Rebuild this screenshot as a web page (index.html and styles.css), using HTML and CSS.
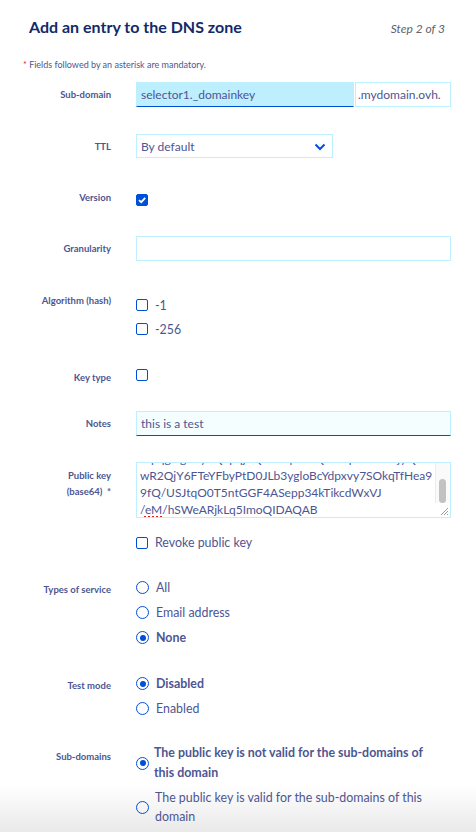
FILE: index.html
```html
<!DOCTYPE html>
<html lang="en">
<head>
<meta charset="utf-8">
<title>Add an entry to the DNS zone</title>
<link rel="stylesheet" href="styles.css">
</head>
<body>
<div class="page">
  <header class="head">
    <h1 class="title">Add an entry to the DNS zone</h1>
    <span class="step">Step 2 of 3</span>
  </header>
  <p class="note"><span class="ast">*</span> Fields followed by an asterisk are mandatory.</p>

  <div class="form">
    <div class="row mt-sub">
      <div class="lbl">Sub-domain</div>
      <div class="field">
        <div class="combo">
          <div class="input active grow">selector1._domainkey</div>
          <div class="suffix">.mydomain.ovh.</div>
        </div>
      </div>
    </div>

    <div class="row mt-27">
      <div class="lbl">TTL</div>
      <div class="field">
        <div class="select">
          <span>By default</span>
          <svg class="chev" width="12" height="8" viewBox="0 0 12 8"><path d="M1.5 1.5 L6 6 L10.5 1.5" fill="none" stroke="#0050d7" stroke-width="2"/></svg>
        </div>
      </div>
    </div>

    <div class="row mt-30">
      <div class="lbl l-10">Version</div>
      <div class="field">
        <div class="opt"><span class="cb on"><svg width="10" height="10" viewBox="0 0 10 10"><path d="M2 5.2 L4.2 7.2 L8.2 2.8" fill="none" stroke="#fff" stroke-width="1.8"/></svg></span></div>
      </div>
    </div>

    <div class="row mt-24">
      <div class="lbl">Granularity</div>
      <div class="field"><div class="input"></div></div>
    </div>

    <div class="row mt-32">
      <div class="lbl l-8">Algorithm (hash)</div>
      <div class="field">
        <div class="opt"><span class="cb"></span><span>-1</span></div>
        <div class="opt"><span class="cb"></span><span>-256</span></div>
      </div>
    </div>

    <div class="row mt-22">
      <div class="lbl l-15">Key type</div>
      <div class="field">
        <div class="opt"><span class="cb"></span></div>
      </div>
    </div>

    <div class="row mt-24">
      <div class="lbl">Notes</div>
      <div class="field"><div class="input filled">this is a test</div></div>
    </div>

    <div class="row mt-26">
      <div class="lbl l-pk">Public key<br>(base64)&nbsp; *</div>
      <div class="field">
        <div class="ta">
          <div class="ta-text">
            <div>MpqgOgUzyhQbpqjuQnmWpLEzQ1vRtpdNcMiFjyQ</div>
            <div>wR2QjY6FTeYFbyPtD0JLb3ygloBcYdpxvy7SOkqTfHea9</div>
            <div>9fQ/USJtqO0T5ntGGF4ASepp34kTikcdWxVJ</div>
            <div>/<span class="spell">eM</span>/hSWeARjkLq5ImoQIDAQAB</div>
          </div>
          <span class="track"><span class="thumb"></span></span>
          <svg class="grip" width="10" height="10" viewBox="0 0 10 10"><path d="M9 2 L2 9 M9 5 L5 9 M9 8 L8 9" stroke="#9a9a9a" stroke-width="1"/></svg>
        </div>
        <div class="opt revoke"><span class="cb"></span><span>Revoke public key</span></div>
      </div>
    </div>

    <div class="row mt-20">
      <div class="lbl l-15">Types of service</div>
      <div class="field">
        <div class="opt r"><span class="rd"></span><span>All</span></div>
        <div class="opt r"><span class="rd"></span><span>Email address</span></div>
        <div class="opt r"><span class="rd on"></span><span class="b">None</span></div>
      </div>
    </div>

    <div class="row mt-21">
      <div class="lbl l-15">Test mode</div>
      <div class="field">
        <div class="opt r"><span class="rd on"></span><span class="b">Disabled</span></div>
        <div class="opt r"><span class="rd"></span><span>Enabled</span></div>
      </div>
    </div>

    <div class="row mt-22">
      <div class="lbl l-14">Sub-domains</div>
      <div class="field">
        <div class="opt long"><span class="rd on"></span><span class="b wrap1">The public key is not valid for the sub-domains of this domain</span></div>
        <div class="opt long"><span class="rd"></span><span>The public key is valid for the sub-domains of this domain</span></div>
      </div>
    </div>
  </div>
</div>
</body>
</html>
```

FILE: styles.css
```css
* { box-sizing: border-box; }

body {
  margin: 0;
  font-family: Lato, "Liberation Sans", sans-serif;
  color: #4d5693;
  background: #fff;
}

.page {
  width: 476px;
  height: 832px;
  overflow: hidden;
  background: linear-gradient(to bottom, #fff 0, #fff 785px, #e9e9e9 832px);
}

.head {
  display: flex;
  justify-content: space-between;
  align-items: baseline;
  padding: 16px 31px 0 29px;
}

.title {
  margin: 0;
  font-size: 16px;
  line-height: 22px;
  font-weight: 700;
  color: #122a6b;
}

.step {
  font-size: 12px;
  font-style: italic;
  color: #5e6170;
}

.note {
  margin: 21px 0 0 23px;
  font-size: 9px;
  line-height: 12px;
}

.ast { color: #e2211c; }

.row { display: flex; }
.mt-sub { margin-top: 11px; }
.mt-20 { margin-top: 20px; }
.mt-21 { margin-top: 21px; }
.mt-22 { margin-top: 22px; }
.mt-24 { margin-top: 24px; }
.mt-26 { margin-top: 26px; }
.mt-27 { margin-top: 27px; }
.mt-30 { margin-top: 30px; }
.mt-32 { margin-top: 32px; }

.lbl {
  width: 111px;
  flex: none;
  text-align: right;
  font-size: 9.5px;
  font-weight: 700;
  line-height: 14px;
  padding-top: 6px;
}
.l-8 { padding-top: 1px; }
.l-10 { padding-top: 3px; }
.l-14 { padding-top: 7px; }
.l-15 { padding-top: 8px; }
.l-pk { padding-top: 6px; line-height: 16px; }

.field {
  margin-left: 25px;
  width: 315px;
  flex: none;
}

.combo { display: flex; }
.grow { flex: 1; }

.input {
  height: 25px;
  border: 1px solid #bef1ff;
  padding: 0 4px;
  font-size: 12px;
  display: flex;
  align-items: center;
}
.input.active {
  background: #bdefff;
  border-color: #bdefff;
  border-bottom-color: #0050d7;
}
.input.filled {
  background: #f5feff;
  border-bottom-color: #0050d7;
}

.suffix {
  width: 96px;
  height: 25px;
  margin-left: 1px;
  border: 1px solid #bef1ff;
  padding: 0 2px;
  font-size: 12px;
  display: flex;
  align-items: center;
}

.select {
  width: 197px;
  height: 24px;
  border: 1px solid #bef1ff;
  padding: 0 6px 0 4px;
  font-size: 12px;
  display: flex;
  align-items: center;
  justify-content: space-between;
}
.chev { margin-top: 2px; }

.opt {
  display: flex;
  align-items: center;
  gap: 7px;
  height: 24px;
  font-size: 12.4px;
}
.opt.r { height: 25px; }
.b { font-weight: 700; }

.cb {
  width: 12px;
  height: 12px;
  flex: none;
  border: 1.5px solid #0050d7;
  border-radius: 2px;
  display: flex;
  align-items: center;
  justify-content: center;
}
.cb.on { background: #0050d7; }

.rd {
  width: 13px;
  height: 13px;
  flex: none;
  border: 1.5px solid #0050d7;
  border-radius: 50%;
  display: flex;
  align-items: center;
  justify-content: center;
}
.rd.on::after {
  content: "";
  width: 6px;
  height: 6px;
  border-radius: 50%;
  background: #0050d7;
}

.ta {
  position: relative;
  height: 56px;
  border: 1px solid #bef1ff;
  overflow: hidden;
  font-size: 12px;
  line-height: 17px;
  padding: 0 18px 0 3px;
}
.ta-text { margin-top: -13px; white-space: nowrap; }
.spell {
  text-decoration: underline dotted #e2211c;
  text-decoration-thickness: 1.5px;
  text-underline-offset: 2px;
}
.track {
  position: absolute;
  right: 0;
  top: 0;
  width: 15px;
  height: 40px;
  background: #fafafa;
  border-left: 1px solid #ececec;
}
.thumb {
  position: absolute;
  left: 3px;
  top: 16px;
  width: 7px;
  height: 24px;
  border-radius: 4px;
  background: #c2c2c2;
}
.grip {
  position: absolute;
  right: 1px;
  bottom: 1px;
}

.revoke { margin-top: 12px; height: 25px; }

.opt.long {
  height: auto;
  align-items: center;
  gap: 5px;
  line-height: 20px;
}
.wrap1 { max-width: 288px; }
.opt.long + .opt.long { margin-top: 5px; gap: 6px; line-height: 19px; }
```
